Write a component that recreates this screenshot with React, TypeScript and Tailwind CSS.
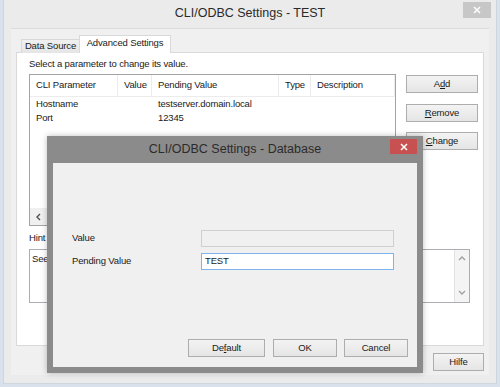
import React from "react";

const btn =
  "flex items-center justify-center h-[18px] border border-[#adadad] bg-linear-to-b from-[#f3f3f3] to-[#e5e5e5] text-[9.5px] text-[#1a1a1a]";

function Chevron({ dir, color = "#a0a0a0" }: { dir: "up" | "down" | "left"; color?: string }) {
  const d =
    dir === "up" ? "M1 5 L4 2 L7 5" : dir === "down" ? "M1 2 L4 5 L7 2" : "M5 1 L2 4 L5 7";
  return (
    <svg width="8" height="8" viewBox="0 0 8 8">
      <path d={d} fill="none" stroke={color} strokeWidth="1.4" />
    </svg>
  );
}

function CloseX({ color = "#ffffff" }: { color?: string }) {
  return (
    <svg width="8" height="8" viewBox="0 0 8 8">
      <path d="M1 1 L7 7 M7 1 L1 7" stroke={color} strokeWidth="1.5" />
    </svg>
  );
}

export default function App() {
  return (
    <div className="w-[500px] h-[387px] bg-[#d9e1ec] relative overflow-hidden font-['Liberation_Sans',Arial,sans-serif] text-[9.5px] tracking-[-0.15px] text-[#1a1a1a]">
      {/* Main window */}
      <div className="mx-[3px] h-[384px] bg-[#ebebeb] flex flex-col border-x border-b border-[#d0d6de]">
        {/* Title bar */}
        <div className="h-[28px] grid grid-cols-[1fr_auto_1fr]">
          <div />
          <div className="self-center text-[12.5px] tracking-normal text-[#2a2a2a] pb-[1px]">CLI/ODBC Settings - TEST</div>
          <div className="flex justify-end pr-[5px] pt-[2px]">
            <div className="w-[28px] h-[16px] bg-[#c7c7c7] flex items-center justify-center">
              <CloseX />
            </div>
          </div>
        </div>
        {/* Client area */}
        <div className="mx-[7px] h-[347px] bg-[#f0f0f0] border-t border-[#dcdcdc] flex flex-col pl-[5px] pr-[5px] pt-[6px]">
          {/* Tabs */}
          <div className="flex items-end pl-[5px] h-[18px] relative z-10 -mb-[1px]">
            <div className="w-[59px] h-[14px] border border-b-0 border-[#d9d9d9] bg-linear-to-b from-[#f0f0f0] to-[#e5e5e5] flex items-center justify-center">
              Data Source
            </div>
            <div className="w-[92px] h-[18px] -ml-[1px] border border-b-0 border-[#d9d9d9] bg-white flex items-center justify-center pb-[2px]">
              Advanced Settings
            </div>
          </div>
          {/* Panel */}
          <div className="h-[294px] bg-white border border-[#d9d9d9] flex flex-col">
            <div className="flex pl-[12px]">
              <div className="w-[367px] flex flex-col pt-[5px]">
                <div className="h-[12px] leading-[12px]">Select a parameter to change its value.</div>
                <div className="mt-[4px] h-[152px] border border-[#a3a3a3] flex flex-col">
                  <div className="flex h-[22px] items-center border-b border-[#ececec]">
                    <div className="w-[88px] h-full flex items-center pl-[6px] border-r border-[#ececec]">CLI Parameter</div>
                    <div className="w-[34px] h-full flex items-center pl-[6px] border-r border-[#ececec]">Value</div>
                    <div className="w-[127px] h-full flex items-center pl-[6px] border-r border-[#ececec]">Pending Value</div>
                    <div className="w-[32px] h-full flex items-center pl-[6px] border-r border-[#ececec]">Type</div>
                    <div className="w-[84px] h-full flex items-center pl-[6px] border-r border-[#ececec]">Description</div>
                  </div>
                  <div className="flex h-[14px] items-center">
                    <div className="w-[88px] pl-[6px]">Hostname</div>
                    <div className="w-[34px]" />
                    <div className="w-[127px] pl-[6px]">testserver.domain.local</div>
                  </div>
                  <div className="flex h-[14px] items-center">
                    <div className="w-[88px] pl-[6px]">Port</div>
                    <div className="w-[34px]" />
                    <div className="w-[127px] pl-[6px]">12345</div>
                  </div>
                  <div className="mt-auto h-[17px] bg-[#f0f0f0] flex items-center">
                    <div className="w-[17px] h-full flex items-center justify-center">
                      <Chevron dir="left" color="#505050" />
                    </div>
                  </div>
                </div>
              </div>
              <div className="ml-[10px] w-[72px] flex flex-col pt-[22px]">
                <div className={btn}>
                  A<span className="underline">d</span>d
                </div>
                <div className={btn + " mt-[11px]"}>
                  <span className="underline">R</span>emove
                </div>
                <div className={btn + " mt-[10px]"}>
                  <span className="underline">C</span>hange
                </div>
              </div>
            </div>
            <div className="pl-[12px] mt-[6px] h-[12px] leading-[12px]">Hint</div>
            <div className="ml-[12px] mt-[5px] w-[441px] h-[54px] border border-[#abadb3] flex">
              <div className="flex-1 pl-[2px] pt-[2px]">See</div>
              <div className="w-[15px] h-full bg-[#f4f4f4] border-l border-[#e2e2e2] flex flex-col items-center justify-between py-[5px]">
                <Chevron dir="up" />
                <Chevron dir="down" />
              </div>
            </div>
          </div>
          <div className="flex justify-end mt-[7px]">
            <div className={btn + " w-[51px]"}>Hilfe</div>
          </div>
        </div>
      </div>

      {/* Overlay dialog */}
      <div className="absolute left-[47px] top-[136px] w-[376px] h-[237px] bg-[#8b8b8b] flex flex-col px-[6px] pb-[6px] shadow-[0_0_6px_rgba(0,0,0,0.25)]">
        <div className="h-[27px] grid grid-cols-[1fr_auto_1fr]">
          <div />
          <div className="self-center text-[12.5px] tracking-normal text-[#2b2b2b] pb-[1px]">CLI/ODBC Settings - Database</div>
          <div className="flex justify-end pt-[3px]">
            <div className="w-[27px] h-[15px] bg-[#c75050] flex items-center justify-center">
              <CloseX />
            </div>
          </div>
        </div>
        <div className="flex-1 bg-[#f0f0f0] flex flex-col pl-[19px] pr-[9px] pt-[67px] pb-[10px]">
          <div className="flex items-center h-[17px]">
            <div className="w-[129px]">Value</div>
            <div className="w-[193px] h-[17px] border border-[#cfcfcf] bg-[#f0f0f0]" />
          </div>
          <div className="flex items-center h-[17px] mt-[6px]">
            <div className="w-[129px]">Pending Value</div>
            <div className="w-[193px] h-[17px] border border-[#7eb4ea] bg-white flex items-center pl-[3px]">TEST</div>
          </div>
          <div className="mt-auto flex justify-end">
            <div className={btn + " w-[77px]"}>
              De<span className="underline">f</span>ault
            </div>
            <div className={btn + " w-[64px] ml-[8px] border-[#7eb4ea]"}>OK</div>
            <div className={btn + " w-[64px] ml-[7px]"}>Cancel</div>
          </div>
        </div>
      </div>
    </div>
  );
}
